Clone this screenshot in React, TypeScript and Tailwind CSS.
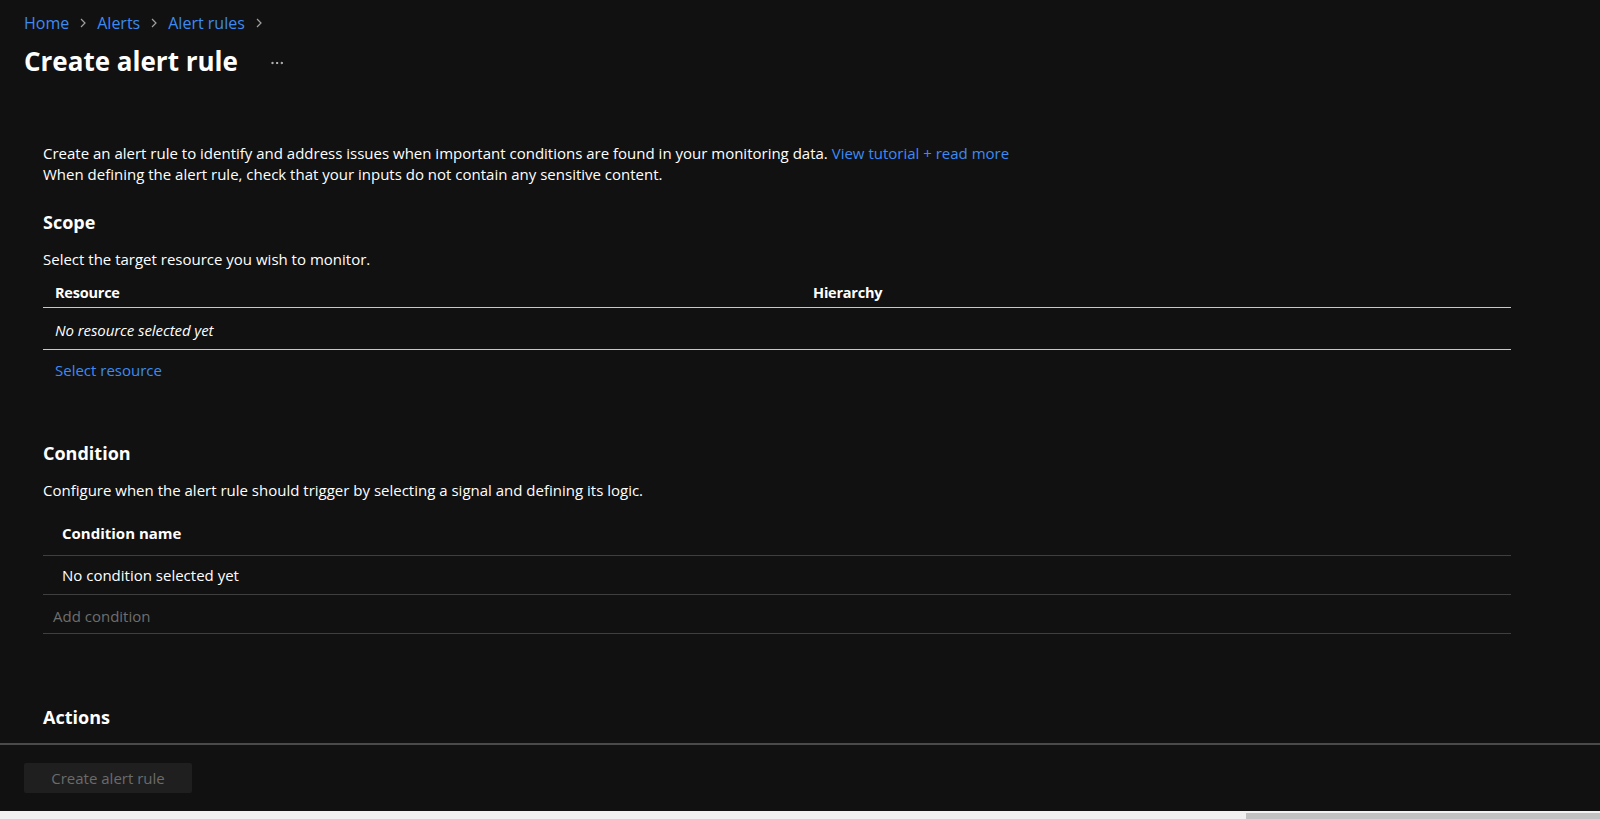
import { MoreHorizontal } from 'lucide-react'

// Azure-style "Create alert rule" blade, dark theme.

const font = { fontFamily: '"Open Sans", "Noto Sans", "Liberation Sans", sans-serif' }

function Chevron() {
  return (
    <svg width="12" height="12" viewBox="0 0 12 12" className="mx-[8px] text-[#a0a0a0]">
      <path d="M4 2l4 4-4 4" fill="none" stroke="currentColor" strokeWidth="1.2" />
    </svg>
  )
}

function Breadcrumb() {
  const items = ['Home', 'Alerts', 'Alert rules']
  return (
    <nav className="flex h-[24px] items-center text-[16px] text-[#3d8bf2]">
      {items.map((item) => (
        <span key={item} className="flex items-center">
          <a className="cursor-pointer hover:underline">{item}</a>
          <Chevron />
        </span>
      ))}
    </nav>
  )
}

export default function App() {
  return (
    <div className="flex h-screen flex-col overflow-hidden bg-[#111111] text-white" style={font}>
      <div className="flex-1 overflow-hidden">
        <div className="px-[24px] pt-[11px]">
          <Breadcrumb />
          <div className="mt-[9px] flex items-center">
            <h1 className="text-[26px] leading-[34px] font-bold">Create alert rule</h1>
            <MoreHorizontal className="ml-[31px] mt-[4px] h-[16px] w-[16px] text-[#d0d0d0]" strokeWidth={1.5} />
          </div>
        </div>

        <div className="mt-[65px] pr-[89px] pl-[43px] text-[15px]">
          <p className="leading-[21px]">
            Create an alert rule to identify and address issues when important conditions are found in your monitoring
            data. <a className="text-[#3d8bf2]">View tutorial + read more</a>
            <br />
            When defining the alert rule, check that your inputs do not contain any sensitive content.
          </p>

          <h2 className="mt-[25px] text-[18px] leading-[24px] font-bold">Scope</h2>
          <p className="mt-[15px] leading-[21px]">Select the target resource you wish to monitor.</p>

          <div className="mt-[13px]">
            <div className="grid grid-cols-[758px_1fr] border-b border-[#c8c8c8] px-[12px] pb-[4px] text-[14.5px] leading-[20px] font-bold tracking-[-0.015em]">
              <span>Resource</span>
              <span>Hierarchy</span>
            </div>
            <div className="border-b border-[#c8c8c8] px-[12px] pt-[12px] pb-[9px] leading-[20px] italic tracking-[-0.005em]">
              No resource selected yet
            </div>
            <a className="mt-[10px] block px-[12px] leading-[20px] text-[#3d8bf2]">Select resource</a>
          </div>

          <h2 className="mt-[61px] text-[18px] leading-[24px] font-bold">Condition</h2>
          <p className="mt-[15px] leading-[21px]">
            Configure when the alert rule should trigger by selecting a signal and defining its logic.
          </p>

          <div className="mt-[22px]">
            <div className="border-b border-[#3f3f3f] px-[19px] pb-[11px] font-bold leading-[21px]">Condition name</div>
            <div className="border-b border-[#3f3f3f] px-[19px] pt-[9px] pb-[8px] leading-[21px]">
              No condition selected yet
            </div>
            <div className="border-b border-[#3f3f3f] px-[10px] pt-[11px] pb-[6px] leading-[21px] text-[#6e6e6e]">
              Add condition
            </div>
          </div>

          <h2 className="mt-[71px] text-[18px] leading-[24px] font-bold">Actions</h2>
        </div>
      </div>

      <div className="h-[68px] shrink-0 border-t-2 border-[#4a4a4a] px-[24px] pt-[18px]">
        <button
          disabled
          className="h-[30px] w-[168px] rounded-[2px] bg-[#1f1f1f] text-[15px] text-[#6b6b6b]"
        >
          Create alert rule
        </button>
      </div>

      <div className="flex h-[8px] shrink-0 items-end bg-[#f1f1f1]">
        <div className="ml-[1246px] h-[6px] flex-1 bg-[#c1c1c1]" />
      </div>
    </div>
  )
}
